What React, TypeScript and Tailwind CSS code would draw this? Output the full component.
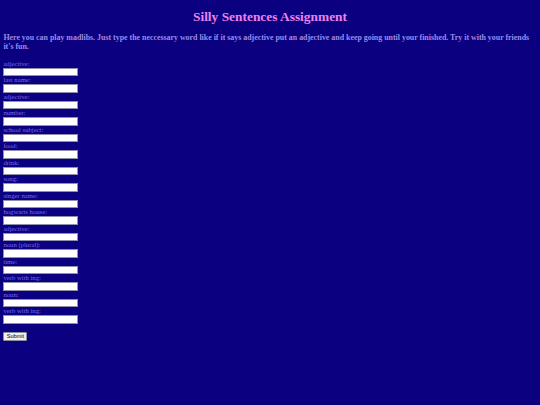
const fields = [
  'adjective:',
  'last name:',
  'adjective:',
  'number:',
  'school subject:',
  'food:',
  'drink:',
  'song:',
  'singer name:',
  'hogwarts house:',
  'adjective:',
  'noun (plural):',
  'time:',
  'verb with ing:',
  'noun:',
  'verb with ing:',
];

export default function App() {
  return (
    <div className="min-h-[405px] bg-[#0a0080] px-[3.4px] pt-[9px] font-['Liberation_Serif',serif]">
      <h1 className="text-center text-[13.4px] font-bold leading-[15.4px] text-[#ee82ee]">
        Silly Sentences Assignment
      </h1>
      <h3 className="mt-[9px] text-[7.9px] font-bold leading-[9px] text-[#9d8ae6]">
        Here you can play madlibs. Just type the neccessary word like if it says adjective put an adjective and keep going until your finished. Try it with your friends it's fun.
      </h3>
      <form className="mt-[8.4px] flex flex-col items-start" onSubmit={(e) => e.preventDefault()}>
        {fields.map((label, i) => (
          <div key={i} className="flex flex-col items-start">
            <label className="text-[6.7px] leading-[7.7px] text-[#7b68ee]">{label}</label>
            <input
              type="text"
              className="h-[8.8px] w-[75px] border border-[#8f8fb0] bg-white text-[5.6px] outline-none"
            />
          </div>
        ))}
        <button
          type="submit"
          className="mt-[8.5px] h-[9px] w-[24px] rounded-[1px] border border-[#8c8c9c] bg-[#efefef] text-[5.6px] leading-none text-black font-['Liberation_Sans',sans-serif]"
        >
          Submit
        </button>
      </form>
    </div>
  );
}
